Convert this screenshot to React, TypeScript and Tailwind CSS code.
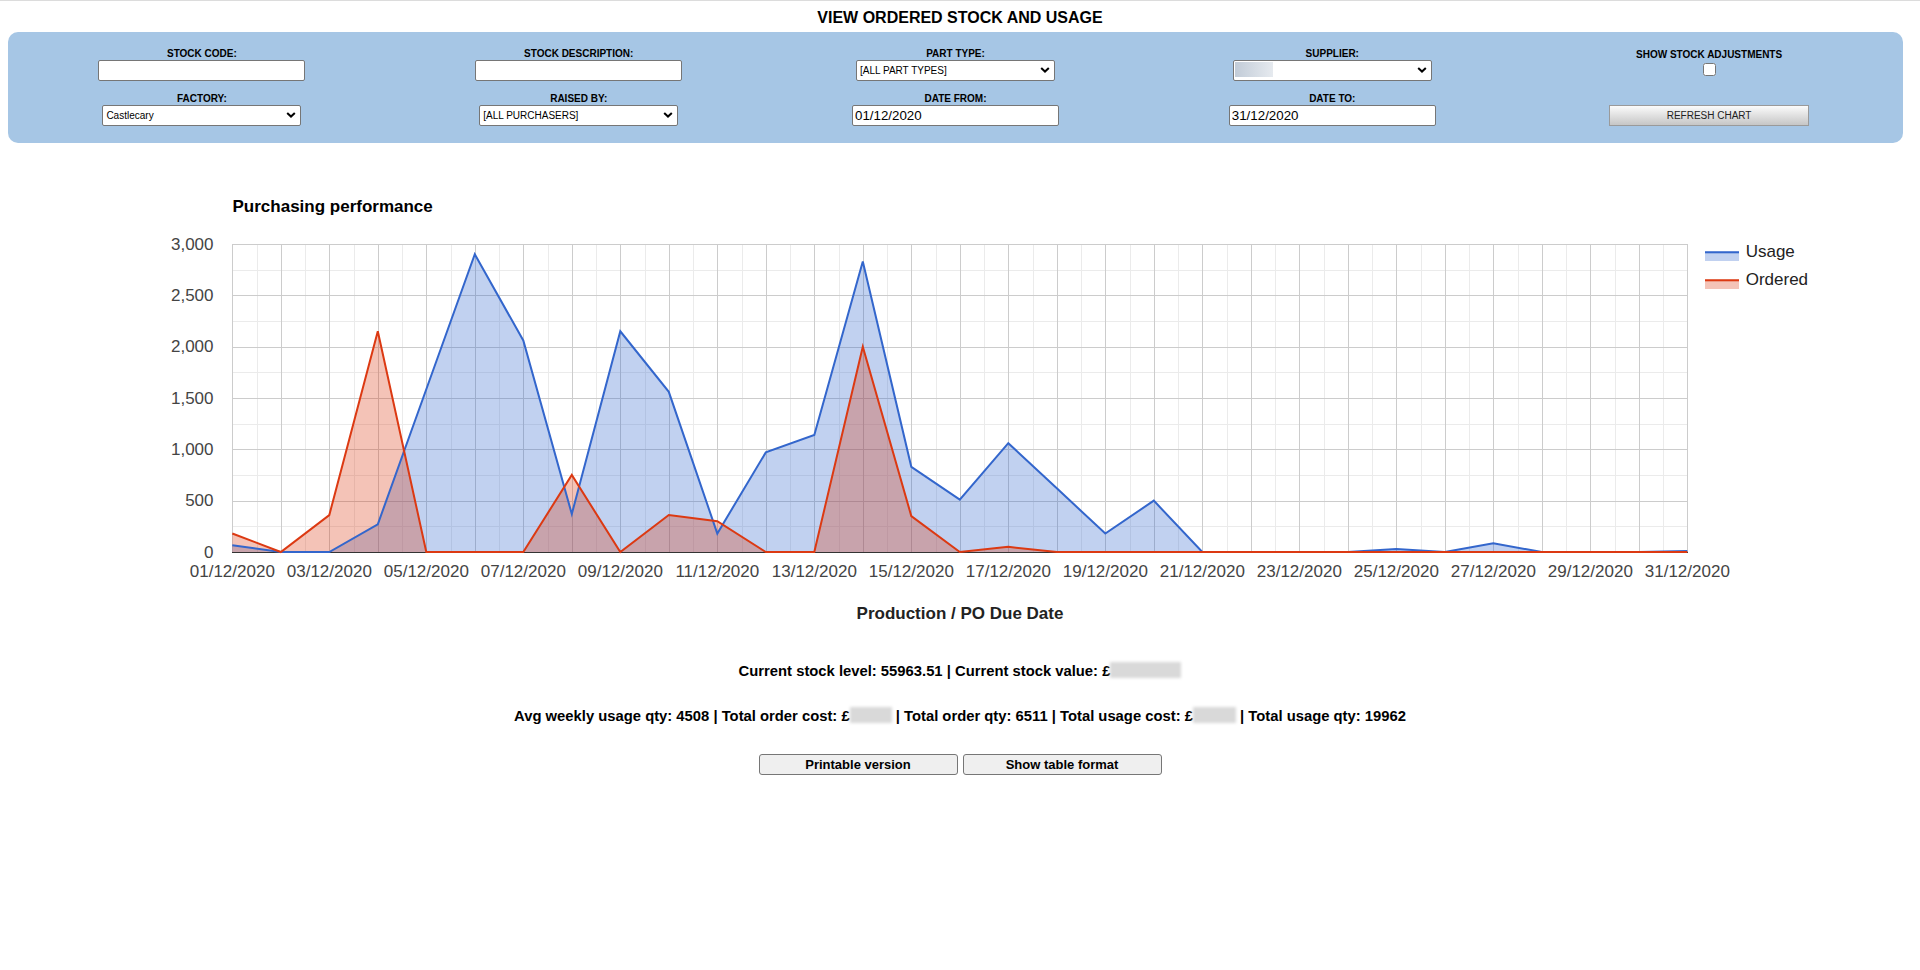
import React from "react"

const usage = [65, 0, 0, 270, 1585, 2900, 2060, 370, 2150, 1560, 180, 970, 1140, 2830, 830, 510, 1060, 620, 180, 500, 0, 0, 0, 0, 30, 0, 85, 0, 0, 0, 10]
const ordered = [180, 0, 360, 2150, 0, 0, 0, 750, 0, 360, 300, 0, 0, 2000, 350, 0, 50, 0, 0, 0, 0, 0, 0, 0, 0, 0, 0, 0, 0, 0, 0]

const X0 = 232.3
const DX = 48.5
const YB = 551
const K = 308 / 3000
const px = (i: number) => X0 + i * DX
const py = (v: number) => YB - v * K
const crisp = (n: number) => Math.round(n) + 0.5

const FONT = "'Liberation Sans', Arial, sans-serif"

function linePath(data: number[]) {
  return data.map((v, i) => `${i === 0 ? "M" : "L"}${px(i).toFixed(2)},${py(v).toFixed(2)}`).join(" ")
}

function areaPath(data: number[]) {
  return `M${px(0)},${YB} ` + data.map((v, i) => `L${px(i).toFixed(2)},${py(v).toFixed(2)}`).join(" ") + ` L${px(data.length - 1)},${YB} Z`
}

function Chevron() {
  return (
    <svg className="pointer-events-none absolute right-[5px] top-1/2 h-[6px] w-[10px] -translate-y-1/2" viewBox="0 0 10 6">
      <path d="M1.2 1 L5 4.6 L8.8 1" fill="none" stroke="#000" strokeWidth="2" />
    </svg>
  )
}

function Label({ children }: { children?: React.ReactNode }) {
  return <div className="h-[11.5px] text-[10px] font-bold leading-[11.5px] text-black">{children}</div>
}

function TextBox({ value }: { value?: string }) {
  return (
    <input
      readOnly
      defaultValue={value}
      className="block h-[21px] w-[207px] rounded-[2px] border border-[#767676] bg-white px-[2px] text-[13.33px] text-black outline-none"
    />
  )
}

function Dropdown({ value, masked }: { value: string; masked?: boolean }) {
  return (
    <div className="relative h-[21px] w-[199px]">
      <select
        defaultValue={value}
        className="block h-[21px] w-[199px] appearance-none rounded-[2px] border border-[#767676] bg-white pl-[3px] text-[10px] text-black outline-none"
      >
        <option value={value}>{value}</option>
      </select>
      {masked && <span className="pointer-events-none absolute left-[2px] top-[2.5px] h-[15px] w-[38px] bg-linear-to-r from-[#c2ccd8] to-[#e6eaef]" />}
      <Chevron />
    </div>
  )
}

function Blur({ w }: { w: number }) {
  return (
    <span
      className={`inline-block h-[16px] bg-[#d9d9d9] blur-[1.5px] align-[-2px] ${w === 71 ? "w-[71px]" : w === 42 ? "w-[42px]" : "w-[43px]"}`}
    />
  )
}

function Chart() {
  const majorV = Array.from({ length: 31 }, (_, i) => crisp(px(i)))
  const minorV = Array.from({ length: 30 }, (_, i) => crisp(px(i + 0.5)))
  const majorH = [0, 500, 1000, 1500, 2000, 2500, 3000]
  const minorH = [250, 750, 1250, 1750, 2250, 2750]
  const xLabels = Array.from({ length: 16 }, (_, k) => k * 2)

  return (
    <svg width={1920} height={508} viewBox="0 142 1920 508" className="block">
      <text x={232.5} y={210.7} fontSize={17} fontWeight="bold" fill="#000" fontFamily={FONT}>
        Purchasing performance
      </text>

      {minorV.map((x) => (
        <line key={`mv${x}`} x1={x} x2={x} y1={243} y2={551} stroke="#ebebeb" strokeWidth={1} />
      ))}
      {minorH.map((v) => (
        <line key={`mh${v}`} x1={232} x2={1688} y1={crisp(py(v))} y2={crisp(py(v))} stroke="#ebebeb" strokeWidth={1} />
      ))}
      {majorV.map((x) => (
        <line key={`v${x}`} x1={x} x2={x} y1={243} y2={552} stroke="#cccccc" strokeWidth={1} />
      ))}
      {majorH.map((v) => (
        <line key={`h${v}`} x1={232} x2={1688} y1={crisp(py(v))} y2={crisp(py(v))} stroke="#cccccc" strokeWidth={1} />
      ))}

      <path d={areaPath(usage)} fill="#3366cc" fillOpacity={0.3} />
      <path d={areaPath(ordered)} fill="#dc3912" fillOpacity={0.3} />
      <line x1={232} x2={1688} y1={551.5} y2={551.5} stroke="#333333" strokeWidth={1} />
      <path d={linePath(usage)} fill="none" stroke="#3366cc" strokeWidth={2} />
      <path d={linePath(ordered)} fill="none" stroke="#dc3912" strokeWidth={2} />

      {majorH.map((v) => (
        <text key={`yl${v}`} x={213.5} y={py(v) + 5.5} textAnchor="end" fontSize={17} fill="#444444" fontFamily={FONT}>
          {v.toLocaleString("en-US")}
        </text>
      ))}
      {xLabels.map((i) => (
        <text key={`xl${i}`} x={px(i)} y={575.5} textAnchor="middle" fontSize={17} fill="#444444" fontFamily={FONT}>
          {String(i + 1).padStart(2, "0")}/12/2020
        </text>
      ))}

      <text x={960} y={617.5} textAnchor="middle" fontSize={17} fontWeight="bold" fill="#222222" fontFamily={FONT}>
        Production / PO Due Date
      </text>

      <rect x={1705} y={250.3} width={34} height={9.7} fill="#3366cc" fillOpacity={0.3} />
      <rect x={1705} y={250.3} width={34} height={2} fill="#3366cc" />
      <text x={1745.7} y={255.7} fontSize={17} fill="#222222" fontFamily={FONT}>
        Usage
      </text>
      <rect x={1705} y={278.3} width={34} height={9.7} fill="#dc3912" fillOpacity={0.3} />
      <rect x={1705} y={278.3} width={34} height={2} fill="#dc3912" />
      <text x={1745.7} y={284} fontSize={17} fill="#222222" fontFamily={FONT}>
        Ordered
      </text>
    </svg>
  )
}

export default function App() {
  return (
    <div className="min-h-[970px] border-t border-[#dcdcdc] bg-white font-['Liberation_Sans',Arial,sans-serif] text-black">
      <div className="pt-[8px] text-center text-[16px] font-bold leading-[18px]">VIEW ORDERED STOCK AND USAGE</div>

      <div className="ml-[8px] mt-[5px] grid w-[1895px] grid-cols-5 gap-y-[12.5px] rounded-[10px] bg-[#a6c6e5] px-[5.5px] pb-[16.5px] pt-[16px]">
        <div className="flex flex-col items-center">
          <Label>STOCK CODE:</Label>
          <TextBox />
        </div>
        <div className="flex flex-col items-center">
          <Label>STOCK DESCRIPTION:</Label>
          <TextBox />
        </div>
        <div className="flex flex-col items-center">
          <Label>PART TYPE:</Label>
          <Dropdown value="[ALL PART TYPES]" />
        </div>
        <div className="flex flex-col items-center">
          <Label>SUPPLIER:</Label>
          <Dropdown value="" masked />
        </div>
        <div className="flex flex-col items-center">
          <div className="mt-[1px] h-[11.5px] text-[10px] font-bold leading-[11.5px]">SHOW STOCK ADJUSTMENTS</div>
          <input type="checkbox" className="mt-[2.5px] h-[13px] w-[13px]" />
        </div>

        <div className="flex flex-col items-center">
          <Label>FACTORY:</Label>
          <Dropdown value="Castlecary" />
        </div>
        <div className="flex flex-col items-center">
          <Label>RAISED BY:</Label>
          <Dropdown value="[ALL PURCHASERS]" />
        </div>
        <div className="flex flex-col items-center">
          <Label>DATE FROM:</Label>
          <TextBox value="01/12/2020" />
        </div>
        <div className="flex flex-col items-center">
          <Label>DATE TO:</Label>
          <TextBox value="31/12/2020" />
        </div>
        <div className="flex flex-col items-center">
          <Label />
          <button className="h-[21.5px] w-[200px] border border-[#9a9a9a] bg-linear-to-b from-[#fbfbfb] to-[#c6c6c6] text-[10px] text-[#222]">
            REFRESH CHART
          </button>
        </div>
      </div>

      <Chart />

      <div className="mt-[11px] text-center text-[14.8px] font-bold leading-[17px]">
        Current stock level: 55963.51 | Current stock value: £<Blur w={71} />
      </div>
      <div className="mt-[27.5px] text-center text-[14.8px] font-bold leading-[17px]">
        Avg weekly usage qty: 4508 | Total order cost: £<Blur w={42} /> | Total order qty: 6511 | Total usage cost: £<Blur w={43} /> | Total usage qty: 19962
      </div>

      <div className="mt-[29px] flex justify-center gap-[5px]">
        <button className="h-[21px] w-[199px] rounded-[3px] border border-[#767676] bg-[#efefef] text-[13px] font-bold text-black">
          Printable version
        </button>
        <button className="h-[21px] w-[199px] rounded-[3px] border border-[#767676] bg-[#efefef] text-[13px] font-bold text-black">
          Show table format
        </button>
      </div>
    </div>
  )
}
